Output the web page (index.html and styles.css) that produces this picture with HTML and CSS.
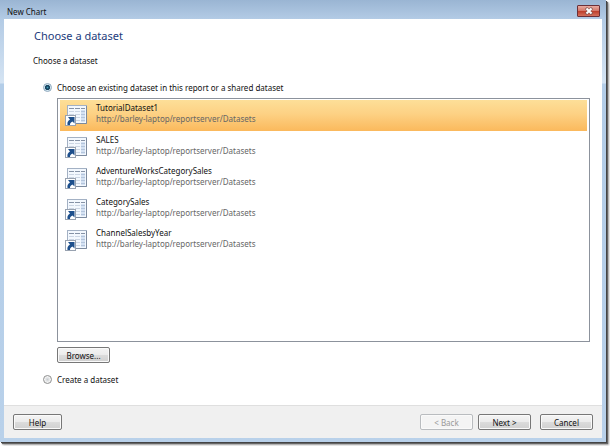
FILE: index.html
```html
<!DOCTYPE html>
<html lang="en">
<head>
    <meta charset="UTF-8">
    <meta name="viewport" content="width=device-width, initial-scale=1.0">
    <title>New Chart</title>
    <link rel="stylesheet" href="styles.css">
</head>
<body>
    <svg class="defs" aria-hidden="true">
        <symbol id="dataset" viewBox="0 0 24 24">
            <rect x="3.5" y="1.5" width="19" height="18" fill="#f3f8fe" stroke="#a3b1c4"/>
            <path d="M12 19.500h10.500V2" fill="none" stroke="#7c8a9e"/>
            <path d="M5 4.500h5M11 4.500h5M17 4.500h4" stroke="#8592a6"/>
            <path d="M5 7.500h5M11 7.500h5M5 10.500h5M11 10.500h5M11 13.500h5M12 16.500h4" stroke="#ccd6e4"/>
            <path d="M17 6h4v12h-4z" fill="#d5e2f3"/>
            <path d="M17 7.500h4M17 10.500h4M17 13.500h4M17 16.500h4" stroke="#b4c5dc"/>
            <rect x="1.500" y="11.500" width="10" height="10" fill="#fff" stroke="#98a2b0"/>
            <path d="M4 13h6.500v6.500l-2-2c-2 1-2.500 1.500-2.500 3.500h-2.500c-.5-3 .5-4 2.500-5.500z" fill="#1d4f8c"/>
        </symbol>
    </svg>
    <div class="window">
        <header class="titlebar">
            <span>New Chart</span>
            <button class="close" type="button" aria-label="Close">
                <svg viewBox="0 0 10 8" width="10" height="8">
                    <path d="M2 1l6 6M8 1l-6 6" stroke="#7a5552" stroke-width="3"/>
                    <path d="M2.500 1.500l5 5M7.500 1.500l-5 5" stroke="#fff" stroke-width="2"/>
                </svg>
            </button>
        </header>
        <form class="page">
            <main class="content">
                <h1>Choose a dataset</h1>
                <h2>Choose a dataset</h2>
                <div class="option">
                    <input id="existing" type="radio" name="source" checked>
                    <label for="existing">Choose an existing dataset in this report or a shared dataset</label>
                </div>
                <ul class="datasets" role="listbox" aria-label="Datasets">
                    <li class="selected" role="option" aria-selected="true">
                        <svg class="icon"><use href="#dataset"/></svg>
                        <div><p>TutorialDataset1</p><p class="url">http://barley-laptop/reportserver/Datasets</p></div>
                    </li>
                    <li role="option">
                        <svg class="icon"><use href="#dataset"/></svg>
                        <div><p>SALES</p><p class="url">http://barley-laptop/reportserver/Datasets</p></div>
                    </li>
                    <li role="option">
                        <svg class="icon"><use href="#dataset"/></svg>
                        <div><p>AdventureWorksCategorySales</p><p class="url">http://barley-laptop/reportserver/Datasets</p></div>
                    </li>
                    <li role="option">
                        <svg class="icon"><use href="#dataset"/></svg>
                        <div><p>CategorySales</p><p class="url">http://barley-laptop/reportserver/Datasets</p></div>
                    </li>
                    <li role="option">
                        <svg class="icon"><use href="#dataset"/></svg>
                        <div><p>ChannelSalesbyYear</p><p class="url">http://barley-laptop/reportserver/Datasets</p></div>
                    </li>
                </ul>
                <button class="btn browse" type="button">Browse...</button>
                <div class="option">
                    <input id="create" type="radio" name="source">
                    <label for="create">Create a dataset</label>
                </div>
            </main>
            <footer class="footer">
                <button class="btn help" type="button">Help</button>
                <button class="btn" type="button" disabled>&lt; Back</button>
                <button class="btn next" type="button">Next &gt;</button>
                <button class="btn" type="button">Cancel</button>
            </footer>
        </form>
    </div>
</body>
</html>
```

FILE: styles.css
```css
* {
    box-sizing: border-box;
}

body {
    margin: 0;
    height: 100vh;
    padding: 0 4px 4px 0;
    display: flex;
    background-color: white;
    font-family: "Noto Sans", "Open Sans", sans-serif;
    font-size: 8px;
    line-height: 11px;
    color: #111;
}

h1, h2, p, ul {
    margin: 0;
    padding: 0;
    font-weight: 400;
}

.defs {
    position: absolute;
    width: 0;
    height: 0;
}

.window {
    flex: 1;
    display: flex;
    flex-direction: column;
    padding: 0 4px 4px;
    background: linear-gradient(#9ab5d3, #b3cbe5 19px, #d5e4f3 83px, #b3cde8 84px, #b9d1ea);
    box-shadow: 1px 1px 0 #444, 2px 2px 1px #666, 3px 3px 2px #aaa;
}

.titlebar {
    height: 19px;
    padding: 4px 2px 0 3px;
    display: flex;
    justify-content: space-between;
    align-items: flex-start;
}

.titlebar span {
    padding-top: 2px;
}

.close {
    width: 23px;
    height: 12px;
    margin-top: 1px;
    padding: 0;
    display: flex;
    align-items: center;
    justify-content: center;
    border: 1px solid #6b3038;
    border-radius: 1px;
    background: linear-gradient(#e8aaa0, #d57a6c 45%, #bd3c29 50%, #d4705c);
}

.page {
    flex: 1;
    display: flex;
    flex-direction: column;
}

.content {
    flex: 1;
    display: flex;
    flex-direction: column;
    padding: 8px 12px 20px 29px;
    background-color: white;
}

h1 {
    margin-left: 1px;
    font-size: 11px;
    line-height: 18px;
    color: #1d3c7c;
}

h2 {
    margin-top: 10px;
    font-size: 8px;
}

.option {
    margin-left: 10px;
    display: flex;
    align-items: center;
    gap: 5px;
}

h2 + .option {
    margin-top: 16px;
}

input[type="radio"] {
    appearance: none;
    width: 9px;
    height: 9px;
    margin: 0;
    border: 1px solid #8e8f8f;
    border-radius: 50%;
    background: radial-gradient(#c8ccd0, #f4f4f4 60%);
}

input[type="radio"]:checked {
    border-color: #8fa9be;
    background: radial-gradient(#3b9ab8, #143a55 35%, #1d4a66 45%, #d3e6f0 60%);
}

.datasets {
    flex: 1;
    margin: 5px 0 5px 24px;
    padding: 1px 2px;
    border: 1px solid #8c929c;
    list-style: none;
}

.datasets li {
    height: 31px;
    padding: 2px 4px 0;
    display: flex;
    gap: 8px;
}

.datasets .selected {
    margin-bottom: 1px;
    background: linear-gradient(#fddf98, #fdd184 45%, #fbb95c);
}

.icon {
    width: 24px;
    height: 24px;
    margin-top: 2px;
}

.url {
    color: #666;
}

.btn {
    width: 53px;
    height: 16px;
    padding: 0;
    border: 1px solid #777;
    border-radius: 2px;
    background: linear-gradient(#f4f4f4, #ebebeb 50%, #dcdcdc 50%, #d0d0d0);
    box-shadow: inset 0 0 0 1px #fafafa;
    font: inherit;
    color: #111;
}

.btn:disabled {
    border-color: #b9bcbf;
    background: #f4f4f4;
    color: #999;
}

.browse {
    margin: 0 0 11px 24px;
}

.footer {
    padding: 8px 9px;
    display: flex;
    gap: 5px;
    border-top: 1px solid #dfdfdf;
    background-color: #f0f0f0;
}

.help {
    width: 49px;
    margin-right: auto;
}

.next {
    margin-right: 4px;
}
```
